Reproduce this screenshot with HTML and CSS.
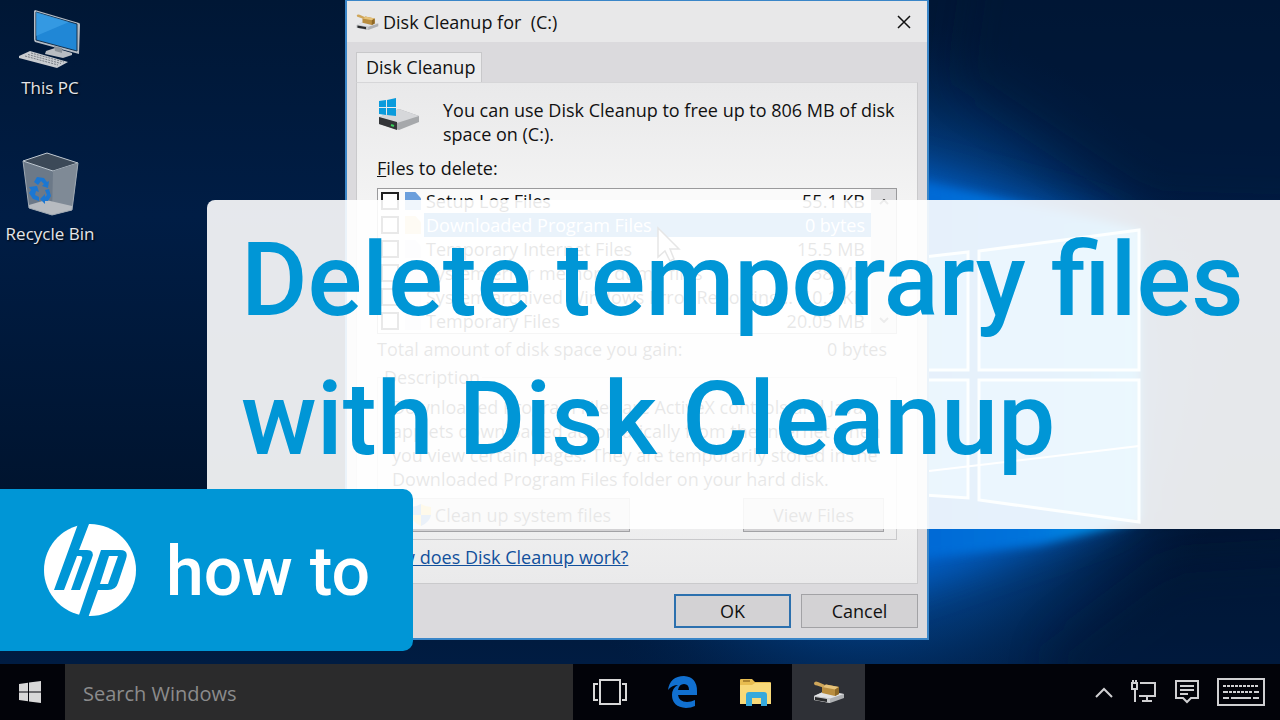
FILE: index.html
```
<!DOCTYPE html>
<html lang="en">
<head>
    <meta charset="UTF-8">
    <title>Delete temporary files with Disk Cleanup</title>
    <link rel="stylesheet" href="styles.css">
</head>
<body>
    <svg class="defs" aria-hidden="true">
        <symbol id="winlogo" viewBox="0 0 22 22">
            <path d="M0 3 L9 1.8 V10.4 H0Z M10 1.6 L22 0 V10.4 H10Z M0 11.4 H9 V20.2 L0 19Z M10 11.4 H22 V22 L10 20.4Z"/>
        </symbol>
        <symbol id="cleanup" viewBox="0 0 32 24">
            <path d="M1 16 L12 11 L31 14 L31 18 L17 23 L1 20Z" fill="#aeb0b3"/>
            <path d="M1 16 L12 11 L31 14 L17 18.5Z" fill="#e2e3e5"/>
            <path d="M1 16 L17 18.5 V23 L1 20Z" fill="#c9cacc"/>
            <path d="M2 17 L14 19 V22 L2 20Z" fill="#2a2b2d"/>
            <path d="M9 7 L13 4.500 L26 7 V14 L22 16 L9 13Z" fill="#b98d3f"/>
            <path d="M9 7 L13 4.500 L26 7 L22 9.500Z" fill="#e6c27a"/>
            <path d="M22 9.500 L26 7 V14 L22 16Z" fill="#8f6927"/>
            <path d="M1 3 Q2 .5 5 2 L12 5 L10 7.500 L4 5.500 Q1 5.500 1 3Z" fill="#cfa65a"/>
        </symbol>
    </svg>

    <div class="desktop">
        <svg class="wallpaper" viewBox="0 0 1280 720" preserveAspectRatio="none" aria-hidden="true">
            <defs>
                <linearGradient id="base" x1="0" y1="0" x2="0" y2="1">
                    <stop offset="0" stop-color="#001735"/>
                    <stop offset=".3" stop-color="#001d45"/>
                    <stop offset=".68" stop-color="#00142f"/>
                    <stop offset=".92" stop-color="#001c42"/>
                </linearGradient>
                <radialGradient id="glow" gradientUnits="userSpaceOnUse" cx="870" cy="385" r="370">
                    <stop offset="0" stop-color="#0a7ae0"/>
                    <stop offset=".45" stop-color="#0563c8" stop-opacity=".85"/>
                    <stop offset=".7" stop-color="#034a98" stop-opacity=".5"/>
                    <stop offset="1" stop-color="#00204a" stop-opacity="0"/>
                </radialGradient>
                <linearGradient id="beam" gradientUnits="userSpaceOnUse" x1="860" y1="0" x2="1150" y2="0">
                    <stop offset="0" stop-color="#0064d2"/>
                    <stop offset=".6" stop-color="#0074dc"/>
                    <stop offset="1" stop-color="#0aa0e8"/>
                </linearGradient>
                <filter id="soft" filterUnits="userSpaceOnUse" x="600" y="-300" width="1000" height="1300"><feGaussianBlur stdDeviation="22"/></filter>
                <filter id="edge" filterUnits="userSpaceOnUse" x="600" y="-300" width="1000" height="1300"><feGaussianBlur stdDeviation="5"/></filter>
            </defs>
            <rect width="1280" height="720" fill="url(#base)"/>
            <rect width="1280" height="720" fill="url(#glow)"/>
            <path d="M1500 -200 H1000 L960 80 L1150 205 L1500 215Z" fill="#001835" opacity=".4" filter="url(#soft)"/>
            <path d="M1500 900 H1080 L1050 650 L1170 560 L1500 540Z" fill="#001835" opacity=".4" filter="url(#soft)"/>
            <path d="M860 160 L1120 232 V510 L860 600Z" fill="#005fc8" filter="url(#soft)"/>
            <path d="M860 168 L1140 230 V520 L1040 545 L860 565Z" fill="url(#beam)" filter="url(#edge)"/>
            <g stroke="#e4fbff" stroke-width="3" fill="#5fc8ff" fill-opacity=".55">
                <path d="M880 262 L968 252 V370 H880Z"/>
                <path d="M979 251 L1139 230 V370 H979Z"/>
                <path d="M880 380 H968 V498 L880 492Z"/>
                <path d="M979 380 H1139 V522 L979 500Z"/>
            </g>
            <path d="M929 471 L1139 446" stroke="#fff" stroke-width="2"/>
        </svg>

        <ul class="shortcuts">
            <li>
                <svg width="66" height="62" viewBox="0 0 66 62">
                    <path d="M18 2 L62 15 Q63 15 63 17 L62 46 L18 34 Q17 33 17 31 V3Z" fill="#b5bcc4"/>
                    <path d="M19 4 L60 16 V43 L19 32Z" fill="#2087d6" stroke="#15314d"/>
                    <path d="M19 4 L52 14 L19 28Z" fill="#43a5ea" opacity=".6"/>
                    <path d="M29 43 L38 40 L55 45 V47 L46 50 L28 46Z" fill="#b9bdc2"/>
                    <path d="M37 38 L45 40 V45 L38 43Z" fill="#8b9299"/>
                    <path d="M2 48 L13 43 L51 54 L40 60 L2 50Z" fill="#c9ccd0"/>
                    <path d="M8 48 L41 57 M11 46.500 L44 55.500 M14 45 L47 54" stroke="#777d84" stroke-dasharray="2 1" fill="none"/>
                </svg>
                <span>This PC</span>
            </li>
            <li>
                <svg width="66" height="66" viewBox="0 0 66 66">
                    <path d="M6 11 L30 3 L61 13 L55 60 L35 65 L12 58Z" fill="#6c7988"/>
                    <path d="M6 11 L30 3 L61 13 L36 21Z" fill="#3c4958" stroke="#bcc5ce"/>
                    <path d="M36 21 L61 13 L55 60 L35 65Z" fill="#7f8a96"/>
                    <path d="M12 55 L29 50 L55 56 V60 L35 65 L12 58Z" fill="#b7bbc0"/>
                    <path d="M6 11 L12 58 L35 65 L55 60 L61 13" fill="none" stroke="#9fa9b3"/>
                    <g fill="#1b77d2">
                        <path d="M17 32 L20 27 L27 28 L30 32 L32 31 L31 38 L25 36 L27 34 L24 31 L21 35Z"/>
                        <path d="M12 37 L20 36 L22 42 L19 41 L18 45 L22 47 V51 L16 49 L12 43 L14 40Z"/>
                        <path d="M28 40 L32 39 L34 46 L31 51 L28 51 V54 L23 49 L28 44 V47 L30 45Z"/>
                    </g>
                </svg>
                <span>Recycle Bin</span>
            </li>
        </ul>

        <section class="dialog">
            <header class="titlebar">
                <svg width="23" height="20"><use href="#cleanup"/></svg>
                <h2>Disk Cleanup for &nbsp;(C:)</h2>
                <button class="close" aria-label="Close">
                    <svg width="14" height="14" viewBox="0 0 14 14"><path d="M1 1 L13 13 M13 1 L1 13" stroke="#111" stroke-width="1.500"/></svg>
                </button>
            </header>
            <div class="content">
                <button class="tab">Disk Cleanup</button>
                <div class="panel">
                    <div class="intro">
                        <svg width="44" height="34" viewBox="0 0 44 34">
                            <path d="M2 19 L22 11 L42 18 V24 L22 32 L2 26Z" fill="#a6a8ab"/>
                            <path d="M2 19 L22 11 L42 18 L20 25Z" fill="#d6d7da"/>
                            <path d="M2 19 L20 24 V32 L2 26Z" fill="#333538"/>
                            <path d="M14 27 L17 28" stroke="#37d058" stroke-width="2"/>
                            <path d="M2 3 L9 2 V9 H2Z M10 2 L19 0 V9 H10Z M2 10 H9 V17 L2 16Z M10 10 H19 V18 L10 17Z" fill="#0a9bdc"/>
                        </svg>
                        <p>You can use Disk Cleanup to free up to 806 MB of disk space on (C:).</p>
                    </div>
                    <p class="caption"><u>F</u>iles to delete:</p>
                    <div class="list">
                        <ul>
                            <li><label><input type="checkbox"><i class="file blue"></i><span>Setup Log Files</span><b>55.1 KB</b></label></li>
                            <li class="selected"><label><input type="checkbox"><i class="file gold"></i><span>Downloaded Program Files</span><b>0 bytes</b></label></li>
                            <li><label><input type="checkbox"><i class="file"></i><span>Temporary Internet Files</span><b>15.5 MB</b></label></li>
                            <li><label><input type="checkbox"><i class="file"></i><span>System error memory dump files</span><b>38 MB</b></label></li>
                            <li><label><input type="checkbox"><i class="file"></i><span>System archived Windows Error Reporting...</span><b>10.1 KB</b></label></li>
                            <li><label><input type="checkbox"><i class="file"></i><span>Temporary Files</span><b>20.05 MB</b></label></li>
                        </ul>
                        <div class="scrollbar">
                            <svg width="10" height="6" viewBox="0 0 10 6"><path d="M1 5 L5 1 L9 5"/></svg>
                            <svg width="10" height="6" viewBox="0 0 10 6"><path d="M1 1 L5 5 L9 1"/></svg>
                        </div>
                    </div>
                    <p class="total"><span>Total amount of disk space you gain:</span><span>0 bytes</span></p>
                    <fieldset>
                        <legend>Description</legend>
                        <p>Downloaded Program Files are ActiveX controls and Java applets downloaded automatically from the Internet when you view certain pages. They are temporarily stored in the Downloaded Program Files folder on your hard disk.</p>
                        <div class="actions">
                            <button class="system">
                                <svg width="20" height="22" viewBox="0 0 20 22">
                                    <path d="M10 0 Q5 3 0 3 V11 H10Z M10 11 H20 Q19 18 10 22Z" fill="#2a6fc4"/>
                                    <path d="M10 0 Q15 3 20 3 V11 H10Z M10 11 H0 Q1 18 10 22Z" fill="#f2c230"/>
                                </svg>
                                Clean up system files
                            </button>
                            <button class="view">View Files</button>
                        </div>
                    </fieldset>
                    <a class="help" href="#">How does Disk Cleanup work?</a>
                </div>
                <div class="buttons">
                    <button class="default">OK</button>
                    <button>Cancel</button>
                </div>
            </div>
        </section>

        <svg class="cursor" width="26" height="38" viewBox="0 0 26 38"><path d="M2 2 V31 L9 25 L14 35 L18 33 L14 23 H23Z" fill="#fff" stroke="#000" stroke-width="1.500"/></svg>

        <div class="headline">
            <h1>Delete temporary files<br>with Disk Cleanup</h1>
        </div>

        <div class="badge">
            <svg width="92" height="92" viewBox="0 0 92 92" role="img" aria-label="HP">
                <circle cx="46" cy="46" r="46" fill="#fff"/>
                <g fill="#0096d6">
                    <path d="M34 0 H45 L35 26 H43 Q51 26 48 34 L36 66 H27 L38 35 Q39 32 36 32 H33 L20 66 H10Z"/>
                    <path d="M57 26 H76 Q85 26 82 35 L74 59 Q72 66 64 66 H54 L44 94 H34Z"/>
                </g>
                <path d="M65 32 H74 L64 60 H56Z" fill="#fff"/>
            </svg>
            <span>how to</span>
        </div>
    </div>

    <footer class="taskbar">
        <button class="start" aria-label="Start"><svg width="22" height="22"><use href="#winlogo"/></svg></button>
        <input type="text" class="search" placeholder="Search Windows" aria-label="Search Windows">
        <button class="task" aria-label="Task View">
            <svg width="34" height="26" viewBox="0 0 34 26" fill="none" stroke="#d8d8d8" stroke-width="2"><path d="M7 1 H27 V25 H7Z M5 5 H1 V21 H5 M29 5 H33 V21 H29"/></svg>
        </button>
        <button class="task" aria-label="Edge">
            <svg width="30" height="32" viewBox="0 0 30 32"><path d="M0 14 Q2 0 16 0 Q29 1 29 15 V19 H10 Q11 26 19 26 Q23 26 27 24 V30 Q23 32 18 32 Q4 31 4 19 Q4 12 10 9 Q4 9 0 14Z M10 14 H21 Q21 8 16 8 Q11 8 10 14Z" fill="#1170d0" fill-rule="evenodd"/></svg>
        </button>
        <button class="task" aria-label="File Explorer">
            <svg width="32" height="28" viewBox="0 0 32 28">
                <path d="M0 2 Q0 1 1 1 H12 L15 4 H30 Q31 4 31 5 V26 H0Z" fill="#e8bd50"/>
                <path d="M0 7 H12 L15 5 H31 V26 H0Z" fill="#f8d979"/>
                <path d="M3 3 H10" stroke="#9b7526" stroke-width="1.500"/>
                <path d="M6 28 V17 Q6 14 9 14 H24 Q27 14 27 17 V28 H21 V20 H12 V28Z" fill="#36a9dc"/>
            </svg>
        </button>
        <button class="task active" aria-label="Disk Cleanup"><svg width="32" height="24"><use href="#cleanup"/></svg></button>
        <div class="tray">
            <svg width="18" height="11" viewBox="0 0 18 11"><path d="M1 10 L9 2 L17 10"/></svg>
            <svg width="26" height="24" viewBox="0 0 26 24"><path d="M9 3 H24 V16 H8 M16 16 V21 M11 21 H21 M1 3 H6 V9 H1Z M4 9 V22 M2 0 V3 M5 0 V3"/></svg>
            <svg width="24" height="24" viewBox="0 0 24 24"><path d="M1 1 H23 V18 H16 L12 22 L8 18 H1Z M5 6 H19 M5 10 H19 M5 14 H13"/></svg>
            <svg width="48" height="28" viewBox="0 0 48 28"><path d="M1 1 H47 V27 H1Z"/><path d="M6 8 H42 M12 14 H36" stroke-dasharray="3 1"/><path d="M6 14 H11 M37 14 H42 M6 20 H12 M14 20 H34 M36 20 H42"/></svg>
        </div>
    </footer>
</body>
</html>
```
FILE: styles.css
```
* {
    box-sizing: border-box;
}
body {
    margin: 0;
    height: 100vh;
    display: flex;
    flex-direction: column;
    overflow: hidden;
    background: #00142f;
    font-family: "Open Sans", "Noto Sans", sans-serif;
    font-size: 18px;
    line-height: 24px;
    color: #111;
}
h1, h2, p, ul {
    margin: 0;
    padding: 0;
    font-weight: normal;
}
ul {
    list-style: none;
}
button, input {
    font: inherit;
    color: inherit;
    margin: 0;
}
button {
    padding: 0;
    border: 0;
    background: none;
}
.defs {
    position: absolute;
    width: 0;
    height: 0;
}

/* desktop */
.desktop {
    position: relative;
    flex: 1;
    min-height: 0;
}
.wallpaper {
    position: absolute;
    top: 0;
    left: 0;
    width: 100%;
    height: 100vh;
}
.shortcuts {
    position: absolute;
    top: 8px;
    left: 0;
    width: 100px;
    display: flex;
    flex-direction: column;
    gap: 50px;
    text-align: center;
    font-size: 17px;
    color: #e4e6ea;
    text-shadow: 1px 1px 2px #000;
}
.shortcuts li {
    display: flex;
    flex-direction: column;
    align-items: center;
    gap: 6px;
    white-space: nowrap;
}

/* dialog window */
.dialog {
    position: absolute;
    top: 0;
    left: 345px;
    width: 584px;
    border: 2px solid #3a86c8;
    border-top-width: 1px;
    background: #dbdadd;
}
.titlebar {
    display: flex;
    align-items: center;
    gap: 4px;
    height: 41px;
    padding: 0 16px 0 9px;
    background: #e8e8e9;
}
.titlebar h2 {
    flex: 1;
    font-size: 18px;
}
.close {
    display: flex;
}
.content {
    padding: 10px 9px;
}
.tab {
    display: block;
    height: 30px;
    padding: 0 6px 2px 9px;
    border: 1px solid #c8c8ca;
    border-bottom: 0;
    background: #ececed;
}
.panel {
    padding: 15px 20px 14px;
    border: 1px solid #cacacc;
    border-top-color: #d6d6d8;
    background: linear-gradient(#e9e9ea, #f4f4f4 25%, #f2f2f2 80%, #eaeaeb);
}
.intro {
    display: flex;
    align-items: flex-start;
    gap: 22px;
}
.intro svg {
    flex: none;
}
.caption {
    margin-top: 10px;
}
.list {
    display: flex;
    margin-top: 8px;
    border: 1px solid #9a9a9c;
    background: #fafafa;
}
.list ul {
    flex: 1;
    min-width: 0;
}
.list label {
    display: flex;
    align-items: center;
    height: 24px;
}
.list input {
    appearance: none;
    flex: none;
    width: 18px;
    height: 18px;
    margin: 0 6px 0 3px;
    border: 2px solid #222;
    background: #fff;
}
.file {
    flex: none;
    width: 16px;
    height: 18px;
    margin-right: 3px;
    background: #e8ecf0;
    clip-path: polygon(0 0, 65% 0, 100% 35%, 100% 100%, 0 100%);
}
.file.blue {
    background: #6c9fdc;
}
.file.gold {
    background: #f4d78a;
}
.list span {
    flex: 1;
    padding-left: 2px;
    white-space: nowrap;
}
.list b {
    padding-right: 6px;
    font-weight: normal;
    line-height: 24px;
    white-space: nowrap;
}
.selected span, .selected b {
    background: #2a80d8;
    color: #fff;
}
.scrollbar {
    width: 25px;
    padding: 10px 0;
    display: flex;
    flex-direction: column;
    justify-content: space-between;
    align-items: center;
    background: #dedee0;
}
.scrollbar path {
    fill: none;
    stroke: #444;
    stroke-width: 2;
}
.total {
    display: flex;
    justify-content: space-between;
    padding: 3px 10px 0 0;
}
fieldset {
    margin: 4px 0 0;
    padding: 6px 12px 7px 14px;
    border: 1px solid #c9c9cb;
}
legend {
    margin-left: -10px;
    padding: 0 2px;
}
.actions {
    display: flex;
    justify-content: space-between;
    margin-top: 7px;
}
.actions button, .buttons button {
    height: 34px;
    border: 1px solid #a2a2a5;
    background: #d3d2d4;
}
.actions .system {
    display: flex;
    align-items: center;
    justify-content: center;
    gap: 4px;
    width: 238px;
}
.actions .view {
    width: 141px;
}
.help {
    display: inline-block;
    margin-top: 5px;
    color: #12509c;
}
.buttons {
    display: flex;
    justify-content: flex-end;
    gap: 10px;
    margin-top: 10px;
}
.buttons button {
    width: 117px;
}
.buttons .default {
    border: 2px solid #2c70ae;
}
.cursor {
    position: absolute;
    top: 226px;
    left: 656px;
}

/* overlay texts */
.headline {
    position: absolute;
    top: 200px;
    left: 207px;
    right: 0;
    padding: 11px 0 40px 34px;
    border-radius: 8px 0 0 0;
    background: rgba(255, 255, 255, .9);
}
.headline h1 {
    font-family: Roboto, sans-serif;
    font-size: 102px;
    line-height: 139px;
    font-weight: 500;
    color: #0096d6;
    white-space: nowrap;
}
.badge {
    position: absolute;
    top: 489px;
    left: 0;
    display: flex;
    align-items: center;
    gap: 30px;
    width: 413px;
    height: 162px;
    padding-left: 44px;
    border-radius: 0 10px 10px 0;
    background: #0096d6;
    color: #fff;
    font-family: Roboto, sans-serif;
    font-size: 68px;
    line-height: 80px;
    font-weight: 500;
    white-space: nowrap;
}
.badge span {
    padding-top: 4px;
}

/* taskbar */
.taskbar {
    position: relative;
    display: flex;
    height: 56px;
    background: #020309;
}
.start {
    width: 65px;
    fill: #d8d8d8;
}
.search {
    width: 508px;
    padding: 4px 18px 0;
    border: 0;
    border-radius: 0;
    background: #2b2b2c;
    color: #ddd;
    font-size: 20px;
}
.search::placeholder {
    color: #8b8b8c;
    opacity: 1;
}
.taskbar button {
    display: flex;
    align-items: center;
    justify-content: center;
}
.taskbar .start {
    padding-right: 6px;
}
.task {
    width: 73px;
}
.active {
    background: #2e3036;
}
.tray {
    display: flex;
    align-items: center;
    gap: 18px;
    margin-left: auto;
    padding-right: 15px;
}
.tray path {
    fill: none;
    stroke: #d0d0d2;
    stroke-width: 2;
}
```
